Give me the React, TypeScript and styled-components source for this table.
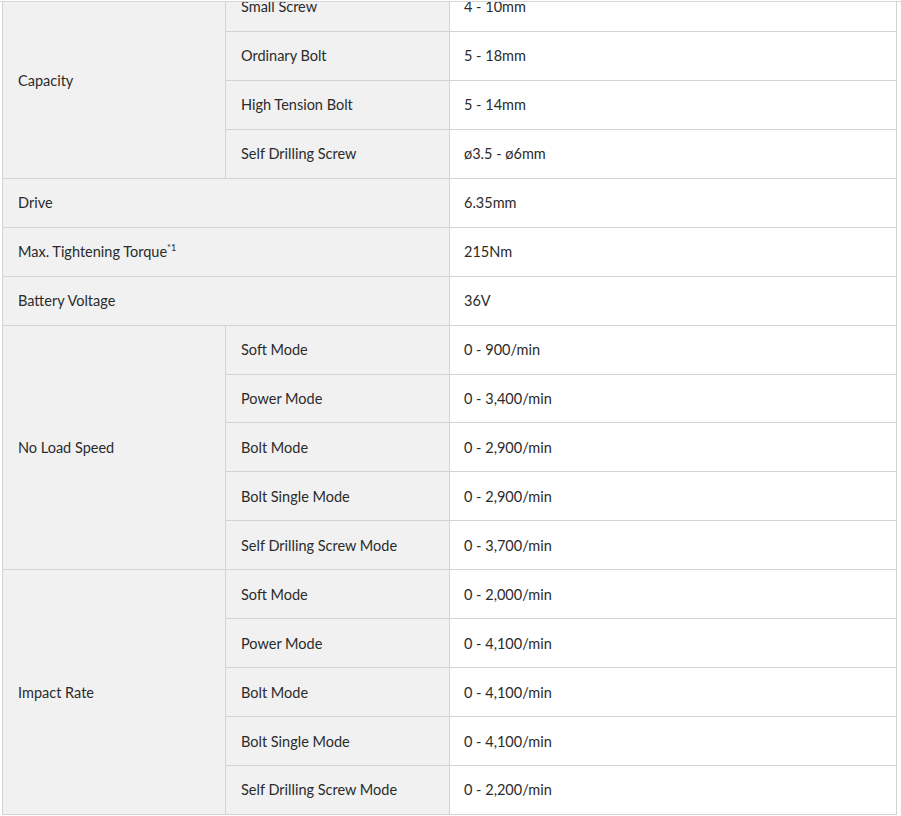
import React from "react";
import styled, { createGlobalStyle } from "styled-components";

const Global = createGlobalStyle`
  html, body { margin: 0; padding: 0; background: #fff; }
  body { font-family: Lato, "Noto Sans", sans-serif; }
`;

const Viewport = styled.div`
  width: 901px;
  height: 815px;
  margin-top: 1px;
  border-top: 1px solid #d6d6d6;
  overflow: hidden;
  box-sizing: border-box;
`;

const Table = styled.table`
  margin: -20px 0 0 2px;
  width: 894px;
  border-collapse: collapse;
  table-layout: fixed;
  font-size: 14.5px;
  color: #2b2b2b;
`;

const Row = styled.tr`
  height: 48.94px;
`;

const Cell = styled.td<{ $head?: boolean }>`
  border: 1px solid #d3d3d3;
  padding: 0 ${(p) => (p.$head ? "15px" : "14px")};
  vertical-align: middle;
  background: ${(p) => (p.$head ? "#f1f1f1" : "#fff")};
  white-space: nowrap;
`;

const Sup = styled.sup`
  font-size: 9px;
  vertical-align: 6px;
  line-height: 0;
`;

type Group = { label: React.ReactNode; items: [string, string][] };
type Single = { label: React.ReactNode; value: string };

const capacity: Group = {
  label: "Capacity",
  items: [
    ["Small Screw", "4 - 10mm"],
    ["Ordinary Bolt", "5 - 18mm"],
    ["High Tension Bolt", "5 - 14mm"],
    ["Self Drilling Screw", "ø3.5 - ø6mm"],
  ],
};

const singles: Single[] = [
  { label: "Drive", value: "6.35mm" },
  {
    label: (
      <>
        Max. Tightening Torque<Sup>*1</Sup>
      </>
    ),
    value: "215Nm",
  },
  { label: "Battery Voltage", value: "36V" },
];

const groups: Group[] = [
  {
    label: "No Load Speed",
    items: [
      ["Soft Mode", "0 - 900/min"],
      ["Power Mode", "0 - 3,400/min"],
      ["Bolt Mode", "0 - 2,900/min"],
      ["Bolt Single Mode", "0 - 2,900/min"],
      ["Self Drilling Screw Mode", "0 - 3,700/min"],
    ],
  },
  {
    label: "Impact Rate",
    items: [
      ["Soft Mode", "0 - 2,000/min"],
      ["Power Mode", "0 - 4,100/min"],
      ["Bolt Mode", "0 - 4,100/min"],
      ["Bolt Single Mode", "0 - 4,100/min"],
      ["Self Drilling Screw Mode", "0 - 2,200/min"],
    ],
  },
];

function GroupRows({ g }: { g: Group }) {
  return (
    <>
      {g.items.map(([sub, val], i) => (
        <Row key={i}>
          {i === 0 && (
            <Cell $head rowSpan={g.items.length}>
              {g.label}
            </Cell>
          )}
          <Cell $head>{sub}</Cell>
          <Cell>{val}</Cell>
        </Row>
      ))}
    </>
  );
}

export default function App() {
  return (
    <>
      <Global />
      <Viewport>
        <Table>
          <colgroup>
            <col style={{ width: 223 }} />
            <col style={{ width: 224 }} />
            <col style={{ width: 447 }} />
          </colgroup>
          <tbody>
            <GroupRows g={capacity} />
            {singles.map((s, i) => (
              <Row key={i}>
                <Cell $head colSpan={2}>
                  {s.label}
                </Cell>
                <Cell>{s.value}</Cell>
              </Row>
            ))}
            {groups.map((g, i) => (
              <GroupRows key={i} g={g} />
            ))}
          </tbody>
        </Table>
      </Viewport>
    </>
  );
}
